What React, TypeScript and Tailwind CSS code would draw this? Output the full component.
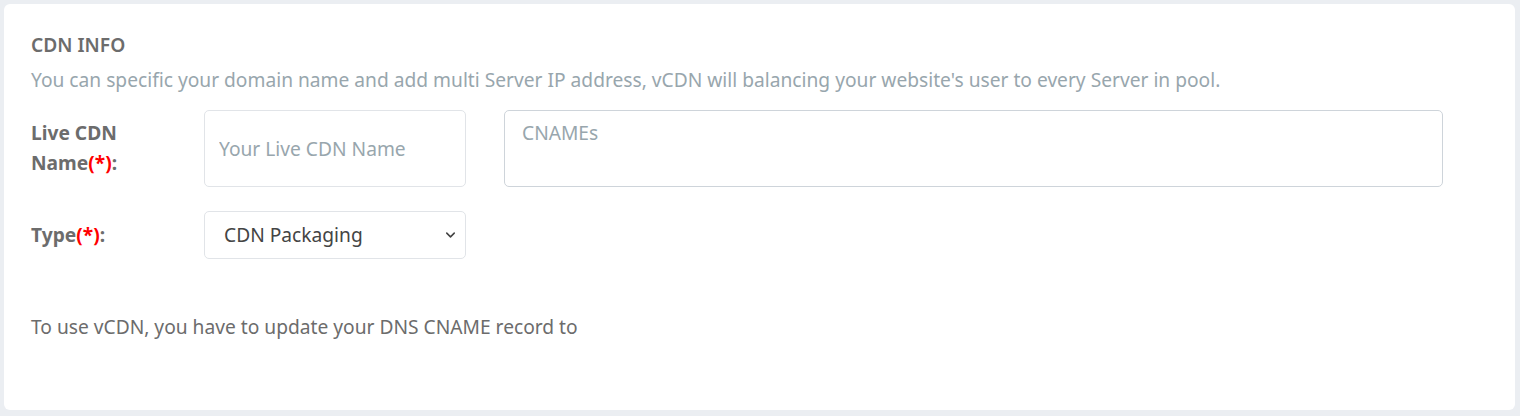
import { ChevronDown } from 'lucide-react';

export default function App() {
  const font = { fontFamily: '"Noto Sans", "Open Sans", sans-serif' };

  return (
    <div className="h-[416px] bg-[#ebeef2] p-[4px]" style={font}>
      {/* Card */}
      <div className="h-[406px] w-[1511px] rounded-md bg-white pl-[27px] pt-[27px]">
        <h4 className="text-[19.2px] leading-[28px] font-semibold text-[#6c6c6c]">CDN INFO</h4>
        <p className="mt-[7px] text-[19.2px] leading-[28px] text-[#98a6ad]">
          You can specific your domain name and add multi Server IP address, vCDN will balancing your website's user to every Server in pool.
        </p>

        {/* Live CDN name row */}
        <div className="mt-[16px] flex items-start">
          <label className="w-[173px] pt-[8px] text-[19.2px] leading-[30px] font-bold text-[#6c6c6c]">
            Live CDN
            <br />
            Name<span className="text-[#ff0000]">(*)</span>:
          </label>
          <input
            type="text"
            placeholder="Your Live CDN Name"
            className="h-[77px] w-[262px] rounded-[5px] border border-[#e1e4e8] px-[14px] text-[19.2px] text-[#444] placeholder:text-[#98a6ad] focus:outline-none"
          />
          <textarea
            placeholder="CNAMEs"
            className="ml-[38px] h-[77px] w-[939px] resize-none rounded-[5px] border border-[#ced4da] px-[17px] pt-[8px] text-[19.2px] leading-[28px] text-[#444] placeholder:text-[#98a6ad] focus:outline-none"
          />
        </div>

        {/* Type row */}
        <div className="mt-[24px] flex items-center">
          <label className="w-[173px] text-[19.2px] leading-[30px] font-bold text-[#6c6c6c]">
            Type<span className="text-[#ff0000]">(*)</span>:
          </label>
          <div className="relative">
            <select
              defaultValue="packaging"
              className="h-[48px] w-[262px] appearance-none rounded-[5px] border border-[#e1e4e8] bg-white pl-[19px] text-[19.2px] text-[#444] focus:outline-none"
            >
              <option value="packaging">CDN Packaging</option>
              <option value="live">CDN Live</option>
            </select>
            <ChevronDown
              className="pointer-events-none absolute right-[8px] top-1/2 h-[15px] w-[15px] -translate-y-1/2 text-[#444]"
              strokeWidth={2.5}
            />
          </div>
        </div>

        <p className="mt-[54px] text-[19.2px] leading-[28px] text-[#6c6c6c]">
          To use vCDN, you have to update your DNS CNAME record to
        </p>
      </div>
    </div>
  );
}
